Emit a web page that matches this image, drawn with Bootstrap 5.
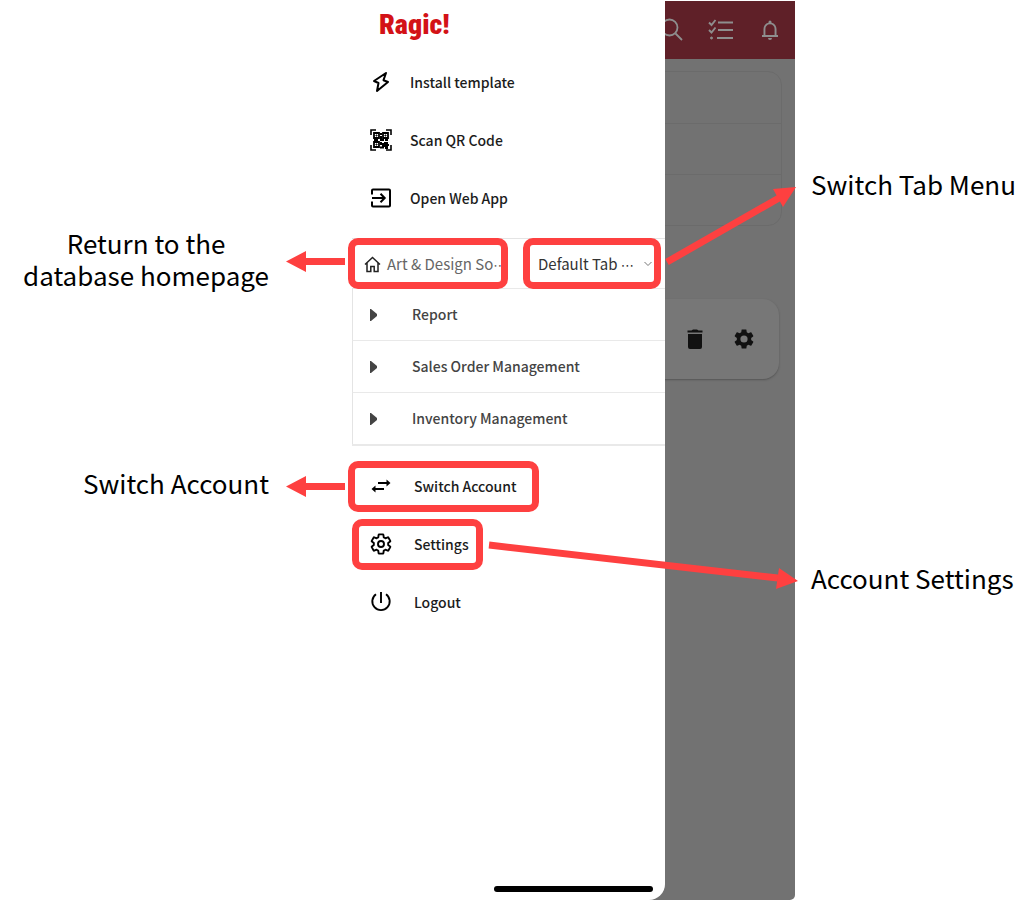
<!DOCTYPE html>
<html lang="en">
<head>
<meta charset="utf-8">
<meta name="viewport" content="width=device-width, initial-scale=1">
<title>Ragic app menu guide</title>
<link href="https://cdn.jsdelivr.net/npm/bootstrap@5.3.0/dist/css/bootstrap.min.css" rel="stylesheet">
<style>
  :root { --mark-red: #fe4040; }
  body { font-family: "Noto Sans CJK SC", "Noto Sans", sans-serif; color: #000; background: #fff; }
  svg { display: block; flex: none; }
  .guide { display: grid; grid-template-columns: minmax(0, 352fr) 443px minmax(0, 239fr); min-height: 100vh; }
  .callout { font-size: 26px; line-height: 32px; white-space: nowrap; }
  .callouts-start { padding: 227px 83px 0 0; gap: 176px; }
  .callouts-end { padding: 168px 0 0 16px; gap: 362px; }

  /* Dimmed screen behind the drawer */
  .phone { padding-top: 1px; }
  .screen { background: #727272; border-radius: 0 0 5px 0; }
  .screen-bar { height: 58px; background: #5f2028; color: #8e8e8e; gap: 24px; padding-right: 13px; }
  .panel { margin: 12px 13px 0 0; border: 1px solid #6b6b6b; border-radius: 0 14px 14px 0; }
  .panel-line { height: 51px; }
  .panel-line + .panel-line { border-top: 1px solid #6b6b6b; }
  .tools { margin: 73px 16px 0 0; height: 80px; background: #777; border-radius: 0 16px 16px 0; box-shadow: 0 1px 2px #555; gap: 25px; padding-right: 23px; color: #111; }

  /* Drawer */
  .drawer { position: absolute; inset: 0 auto 0 0; width: 313px; background: #fff; border-bottom-right-radius: 16px; }
  .brand { height: 53px; padding-left: 27px; color: #d31217; font: 900 28px/50px "Roboto Condensed", Roboto, sans-serif; }
  .entry { position: relative; height: 58px; padding: 0 0 0 17px; gap: 17px; font-size: 14px; font-weight: 500; color: #1c1c1c; background: none; border: 0; text-align: left; }
  .entry-low { gap: 21px; }
  .ring { position: absolute; top: 4px; height: 51px; border: 7px solid var(--mark-red); border-radius: 10px; pointer-events: none; }
  .ring-account { left: -4px; width: 191px; }
  .ring-settings { left: 0; width: 131px; }
  .tabs { margin-top: 11px; margin-bottom: 11px; border-bottom: 2px solid #e9e9e9; }
  .tab-head { height: 50px; border-top: 1px solid #e4e4e4; }
  .tab-head button { position: relative; background: none; border: 0; height: 50px; color: #333; font-size: 15px; white-space: nowrap; }
  .tab-head .ring { top: -1px; }
  .tab-head .home { width: 171px; padding: 0 0 0 12px; gap: 6px; color: #666; }
  .tab-head .pick { width: 138px; padding: 0 9px 0 15px; }
  .dots { font-family: "DejaVu Sans", sans-serif; font-size: 13px; }
  .ring-home { left: -4px; width: 160px; }
  .ring-tab { left: 0; width: 138px; }
  .folder { height: 52px; padding: 0 0 0 17px; gap: 35px; border: 0; border-top: 1px solid #e9e9e9; border-left: 1px solid #e4e4e4; background: none; color: #444; font-size: 14px; font-weight: 500; text-align: left; }
  .home-bar { position: absolute; bottom: 8px; right: 12px; width: 159px; height: 6px; border-radius: 3px; background: #000; }
  .arrows { position: absolute; inset: 0 auto auto 0; overflow: visible; pointer-events: none; }
</style>
</head>
<body>
<main class="guide">
  <section class="callouts-start d-flex flex-column align-items-end text-center">
    <div class="callout">Return to the<br>database homepage</div>
    <div class="callout">Switch Account</div>
  </section>

  <section class="phone position-relative d-flex">
    <div class="screen flex-fill overflow-hidden">
      <div class="screen-bar d-flex align-items-center justify-content-end">
        <svg width="24" height="24" viewBox="0 0 24 24" fill="none" stroke="currentColor" stroke-width="1.800"><circle cx="9.500" cy="9.500" r="8"/><path d="M15.500 15.500l6.500 6.500"/></svg>
        <svg width="26" height="24" viewBox="0 0 26 24" fill="none" stroke="currentColor" stroke-width="1.900"><path d="M10 4.500h15M10 12h15M9 20h16M1 4.500l2.500 2.500L7.500 2M1 12l2.500 2.500L7.500 9.500"/><circle cx="3.500" cy="20" r="1" fill="currentColor" stroke-width="1"/></svg>
        <svg width="24" height="24" viewBox="0 0 24 24" fill="currentColor"><path d="M12 22a2 2 0 0 0 2-2h-4a2 2 0 0 0 2 2zM18.500 17v-6c0-3.070-1.840-5.640-5-6.320V4a1.500 1.500 0 0 0-3 0v.680C7.330 5.360 5.500 7.920 5.500 11v6H4v1.900h16V17zm-1.900 0H7.400v-6c0-2.600 1.700-4.700 4.600-4.700s4.600 2.100 4.600 4.700z"/></svg>
      </div>
      <div class="panel"><div class="panel-line"></div><div class="panel-line"></div><div class="panel-line"></div></div>
      <div class="tools d-flex align-items-center justify-content-end">
        <svg width="24" height="24" viewBox="0 0 24 24" fill="currentColor"><path d="M5 7h14v13a2 2 0 0 1-2 2H7a2 2 0 0 1-2-2zM4.500 3.500H8.500L10 2.500h4l1.500 1h4v2h-15z"/></svg>
        <svg width="24" height="24" viewBox="0 0 24 24" fill="currentColor"><path d="M19.140 12.940c.04-.3.06-.61.06-.94 0-.32-.02-.64-.07-.94l2.030-1.580c.18-.14.23-.41.12-.61l-1.920-3.320c-.12-.22-.37-.29-.59-.22l-2.390.96c-.5-.38-1.030-.7-1.620-.94L14.400 2.810c-.04-.24-.24-.41-.48-.41h-3.840c-.24 0-.43.17-.47.41L9.250 5.350C8.660 5.590 8.120 5.920 7.630 6.290L5.240 5.330c-.22-.08-.47 0-.59.22L2.740 8.870c-.12.21-.08.47.12.61l2.030 1.580C4.840 11.360 4.800 11.690 4.800 12s.02.64.07.94l-2.030 1.580c-.18.14-.23.41-.12.61l1.920 3.320c.12.22.37.29.59.22l2.390-.96c.5.38 1.030.7 1.620.94l.36 2.540c.05.24.24.41.48.41h3.840c.24 0 .44-.17.47-.41l.36-2.540c.59-.24 1.130-.56 1.620-.94l2.390.96c.22.08.47 0 .59-.22l1.920-3.320c.12-.22.07-.47-.12-.61zM12 15.600A3.600 3.600 0 1 1 12 8.400a3.600 3.600 0 0 1 0 7.200z"/></svg>
      </div>
    </div>

    <nav class="drawer d-flex flex-column" aria-label="Main menu">
      <div class="brand">Ragic!</div>
      <button class="entry d-flex align-items-center" type="button">
        <svg width="24" height="24" viewBox="0 0 24 24" fill="none" stroke="#000" stroke-width="2" stroke-linejoin="round"><path d="M17 3L5 11l4.500 2L8 21 19 12l-4.500-1.800z"/></svg>
        <span>Install template</span>
      </button>
      <button class="entry d-flex align-items-center" type="button">
        <svg width="24" height="24" viewBox="0 0 24 24" fill="none" stroke="#000" stroke-width="1.600"><path d="M2 7V2h5M17 2h5v5M22 17v5h-5M7 22H2v-5"/><path d="M5 5h5v5H5zM14 5h5v5h-5zM5 14h5v5H5z" stroke-width="1.800"/><path d="M7 7h1v1H7zM16 7h1v1h-1zM7 16h1v1H7z" stroke-width="1"/><path d="M11 6h2M12 8v3M5 12h4M11 12h4M16 12h3M12 14v2h3M13 18h3v-4M18 14v5M11 19.500h4M17 17h3M16 20h3" stroke-width="2"/></svg>
        <span>Scan QR Code</span>
      </button>
      <button class="entry d-flex align-items-center" type="button">
        <svg width="24" height="24" viewBox="0 0 24 24" fill="none" stroke="#000" stroke-width="2"><path d="M3 8.500V4.500Q3 3.500 4 3.500H20Q21 3.500 21 4.500V19.500Q21 20.500 20 20.500H4Q3 20.500 3 19.500V15.500M3 12h12M11.500 7.800l4.200 4.200-4.200 4.200"/></svg>
        <span>Open Web App</span>
      </button>

      <div class="tabs d-flex flex-column">
        <div class="tab-head d-flex">
          <button class="home d-flex align-items-center" type="button">
            <svg width="17" height="17" viewBox="0 0 17 17" fill="none" stroke="#222" stroke-width="1.500"><path d="M1 8.500L8.500 1.500 16 8.500M3 7v8.500h3.800v-5h3.400v5H14V7"/></svg>
            <span>Art &amp; Design So<span class="dots">⋯</span></span>
            <span class="ring ring-home"></span>
          </button>
          <button class="pick d-flex align-items-center justify-content-between" type="button">
            <span>Default Tab <span class="dots">⋯</span></span>
            <svg width="8" height="6" viewBox="0 0 8 6" fill="none" stroke="#777"><path d="M.5 1L4 4.500 7.500 1"/></svg>
            <span class="ring ring-tab"></span>
          </button>
        </div>
        <button class="folder d-flex align-items-center" type="button"><svg width="7" height="12" viewBox="0 0 7 12"><path d="M0 0h1l6 5v2l-6 5H0z" fill="#444"/></svg><span>Report</span></button>
        <button class="folder d-flex align-items-center" type="button"><svg width="7" height="12" viewBox="0 0 7 12"><path d="M0 0h1l6 5v2l-6 5H0z" fill="#444"/></svg><span>Sales Order Management</span></button>
        <button class="folder d-flex align-items-center" type="button"><svg width="7" height="12" viewBox="0 0 7 12"><path d="M0 0h1l6 5v2l-6 5H0z" fill="#444"/></svg><span>Inventory Management</span></button>
      </div>

      <button class="entry entry-low d-flex align-items-center" type="button">
        <svg width="24" height="24" viewBox="0 0 24 24" fill="none" stroke="#000" stroke-width="1.900"><path d="M9 9h10M15 15H5"/><path d="M17.500 5.500L21.500 9l-4 3.500zM6.500 11.500L2.500 15l4 3.500z" fill="#000" stroke="none"/></svg>
        <span>Switch Account</span>
        <span class="ring ring-account"></span>
      </button>
      <button class="entry entry-low d-flex align-items-center" type="button">
        <svg width="24" height="24" viewBox="0 0 24 24" fill="none" stroke="#000" stroke-width="1.900" stroke-linejoin="round"><path d="M19.140 12.940c.04-.3.06-.61.06-.94 0-.32-.02-.64-.07-.94l2.030-1.580c.18-.14.23-.41.12-.61l-1.920-3.320c-.12-.22-.37-.29-.59-.22l-2.390.96c-.5-.38-1.030-.7-1.620-.94L14.400 2.810c-.04-.24-.24-.41-.48-.41h-3.840c-.24 0-.43.17-.47.41L9.250 5.350C8.660 5.590 8.120 5.920 7.630 6.290L5.240 5.330c-.22-.08-.47 0-.59.22L2.740 8.870c-.12.21-.08.47.12.61l2.030 1.580C4.840 11.360 4.800 11.690 4.800 12s.02.64.07.94l-2.030 1.580c-.18.14-.23.41-.12.61l1.920 3.320c.12.22.37.29.59.22l2.390-.96c.5.38 1.030.7 1.620.94l.36 2.540c.05.24.24.41.48.41h3.840c.24 0 .44-.17.47-.41l.36-2.540c.59-.24 1.130-.56 1.620-.94l2.390.96c.22.08.47 0 .59-.22l1.920-3.320c.12-.22.07-.47-.12-.61z"/><circle cx="12" cy="12" r="3"/></svg>
        <span>Settings</span>
        <span class="ring ring-settings"></span>
      </button>
      <button class="entry entry-low d-flex align-items-center" type="button">
        <svg width="24" height="24" viewBox="0 0 24 24" fill="none" stroke="#000" stroke-width="1.900"><path d="M12 2v11M7 4.300a8.700 8.700 0 1 0 10 0"/></svg>
        <span>Logout</span>
      </button>
      <span class="home-bar"></span>
    </nav>

    <!-- Pointers from the highlighted entries to their captions -->
    <svg class="arrows" width="443" height="620" viewBox="0 0 443 620" fill="#fe4040" stroke="#fe4040" stroke-width="7">
      <path d="M-7 261.500H-47M-7 486.500H-47M315 262L427 198M137 545L426 578"/>
      <path stroke="none" d="M-66 261.500l20-10.500v21zM-66 486.500l20-10.500v21zM444 187l-23 2 10 18zM446 581l-19-13-3 21z"/>
    </svg>
  </section>

  <section class="callouts-end d-flex flex-column">
    <div class="callout">Switch Tab Menu</div>
    <div class="callout">Account Settings</div>
  </section>
</main>
<script src="https://cdn.jsdelivr.net/npm/bootstrap@5.3.0/dist/js/bootstrap.bundle.min.js"></script>
</body>
</html>
